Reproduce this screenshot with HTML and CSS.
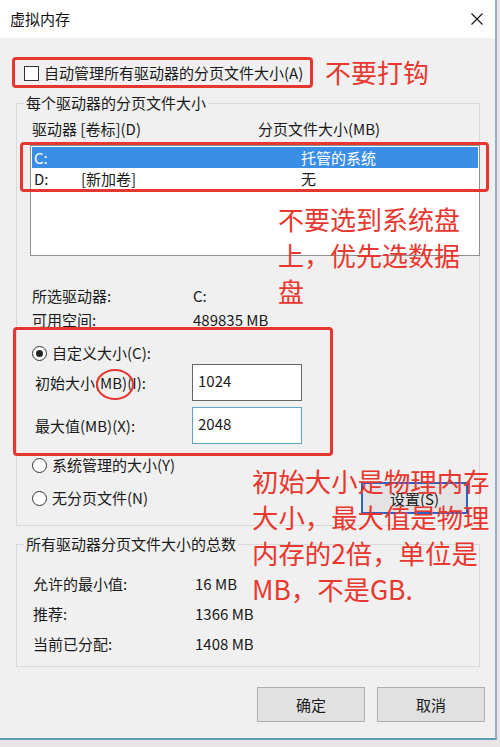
FILE: index.html
```html
<!DOCTYPE html>
<html lang="zh-CN">
<head>
<meta charset="utf-8">
<title>虚拟内存</title>
<link rel="stylesheet" href="styles.css">
</head>
<body>
<div class="window">
  <div class="titlebar">
    <span class="title">虚拟内存</span>
    <svg class="close" width="12" height="12" viewBox="0 0 12 12"><path d="M0.5 0.5 L11.5 11.5 M11.5 0.5 L0.5 11.5" stroke="#111" stroke-width="1.1" fill="none"/></svg>
  </div>
  <div class="dialog">
    <div class="auto-row"><span class="checkbox"></span><span>自动管理所有驱动器的分页文件大小(A)</span></div>

    <fieldset class="group group-drives">
      <legend>每个驱动器的分页文件大小</legend>
      <div class="list-head"><span class="h-drive">驱动器 [卷标](D)</span><span>分页文件大小(MB)</span></div>
      <div class="listbox">
        <div class="list-row selected"><span class="c-drive">C:</span><span class="c-label"></span><span class="c-size">托管的系统</span></div>
        <div class="list-row"><span class="c-drive">D:</span><span class="c-label">[新加卷]</span><span class="c-size">无</span></div>
      </div>
      <div class="info">
        <span>所选驱动器:</span><span>C:</span>
        <span>可用空间:</span><span>489835 MB</span>
      </div>
      <div class="radio-row first"><span class="radio checked"></span><span>自定义大小(C):</span></div>
      <div class="field-row"><span class="field-label">初始大小(MB)(I):</span><div class="input">1024</div></div>
      <div class="field-row second"><span class="field-label">最大值(MB)(X):</span><div class="input focus">2048</div></div>
      <div class="radio-row sys"><span class="radio"></span><span>系统管理的大小(Y)</span></div>
      <div class="radio-row last"><span class="radio"></span><span>无分页文件(N)</span><button class="btn btn-set">设置(S)</button></div>
    </fieldset>

    <fieldset class="group group-total">
      <legend>所有驱动器分页文件大小的总数</legend>
      <div class="totals">
        <span>允许的最小值:</span><span>16 MB</span>
        <span>推荐:</span><span>1366 MB</span>
        <span>当前已分配:</span><span>1408 MB</span>
      </div>
    </fieldset>

    <div class="actions">
      <button class="btn btn-main">确定</button>
      <button class="btn btn-main">取消</button>
    </div>
  </div>

  <div class="mark box1"></div>
  <div class="mark box2"></div>
  <div class="mark box3"></div>
  <div class="mark circle"></div>
  <div class="note note1">不要打钩</div>
  <div class="note note2">不要选到系统盘<br>上，优先选数据<br>盘</div>
  <div class="note note3">初始大小是物理内存<br>大小，最大值是物理<br>内存的2倍，单位是<br>MB，不是GB.</div>
</div>
</body>
</html>
```

FILE: styles.css
```css
html, body {
  margin: 0;
  padding: 0;
}
body {
  background: #e9e4e6;
  width: 500px;
  height: 747px;
  overflow: hidden;
  font-family: "Noto Sans CJK SC", "Microsoft YaHei", sans-serif;
  font-size: 15px;
  color: #1a1a1a;
}
.window {
  position: relative;
  width: 495px;
  height: 738px;
  background: #f0f0f0;
  border-right: 2px solid #8fb0cc;
  border-bottom: 2px solid #5f9db2;
}
.titlebar {
  height: 38px;
  background: #ffffff;
  display: flex;
  align-items: center;
  padding-left: 10px;
}
.title {
  font-size: 15px;
  line-height: 20px;
  color: #111;
}
.close {
  margin-left: auto;
  margin-right: 12px;
}
.dialog {
  display: flex;
  flex-direction: column;
}
.auto-row {
  display: flex;
  align-items: center;
  height: 20px;
  line-height: 20px;
  margin-top: 25px;
  padding-left: 24px;
}
.checkbox {
  width: 15px;
  height: 15px;
  box-sizing: border-box;
  border: 1px solid #333;
  background: #fff;
  margin-right: 5px;
}
.group {
  margin: 0 0 0 16px;
  width: 464px;
  box-sizing: border-box;
  border: 1px solid #d9d9d9;
  padding: 0;
  min-width: 0;
}
.group legend {
  margin-left: 7px;
  padding: 0 2px;
  line-height: 20px;
  height: 20px;
}
.group-drives {
  margin-top: 10px;
  padding-bottom: 11px;
}
.list-head {
  display: flex;
  line-height: 20px;
  margin: 6px 0 0 15px;
}
.h-drive {
  width: 226px;
}
.listbox {
  margin: 6px 0 0 13px;
  width: 450px;
  height: 111px;
  box-sizing: border-box;
  border: 1px solid #8e8e8e;
  background: #fff;
  padding: 1px;
}
.list-row {
  display: flex;
  height: 21px;
  line-height: 21px;
  padding-left: 2px;
}
.list-row.selected {
  background: #3a8ee6;
  color: #fff;
}
.c-drive { width: 47px; }
.c-label { width: 220px; }
.info {
  display: grid;
  grid-template-columns: 161px auto;
  row-gap: 4px;
  line-height: 20px;
  margin: 30px 0 0 15px;
}
.radio-row {
  display: flex;
  align-items: center;
  height: 20px;
  line-height: 20px;
  padding-left: 15px;
}
.radio-row.first { margin-top: 13px; }
.radio-row.sys { margin-top: 11px; }
.radio-row.last {
  margin-top: 7px;
  height: 32px;
}
.radio {
  width: 15px;
  height: 15px;
  box-sizing: border-box;
  border: 1px solid #333;
  border-radius: 50%;
  background: #fff;
  margin-right: 5px;
  display: flex;
  align-items: center;
  justify-content: center;
}
.radio.checked::after {
  content: "";
  width: 7px;
  height: 7px;
  border-radius: 50%;
  background: #222;
}
.field-row {
  display: flex;
  align-items: center;
  margin-top: 1px;
  padding-left: 18px;
}
.field-row.second { margin-top: 6px; }
.field-label {
  width: 157px;
  line-height: 20px;
}
.input {
  width: 110px;
  height: 37px;
  box-sizing: border-box;
  border: 1px solid #666;
  background: #fff;
  padding: 0 0 4px 5px;
  display: flex;
  align-items: center;
  font-size: 15px;
}
.input.focus {
  border-color: #5ea4c8;
}
.btn {
  font-family: inherit;
  font-size: 15px;
  color: #1a1a1a;
  background: #e1e1e1;
  border: 1px solid #adadad;
  padding: 0;
  box-sizing: border-box;
}
.btn-set {
  margin-left: auto;
  margin-right: 11px;
  width: 107px;
  height: 32px;
  border: 2px solid #2c63c7;
  background: #e3e3e3;
}
.group-total {
  margin-top: 8px;
  padding-bottom: 12px;
}
.totals {
  display: grid;
  grid-template-columns: 162px auto;
  row-gap: 10px;
  line-height: 20px;
  margin: 20px 0 0 16px;
}
.actions {
  display: flex;
  justify-content: flex-end;
  gap: 12px;
  margin-top: 20px;
  padding-right: 10px;
}
.btn-main {
  width: 108px;
  height: 35px;
}

/* red annotation overlays */
.mark {
  position: absolute;
  box-sizing: border-box;
  border: 3px solid #e5362f;
  border-radius: 4px;
}
.box1 { left: 12px; top: 57px; width: 301px; height: 31px; }
.box2 { left: 20px; top: 142px; width: 469px; height: 50px; }
.box3 { left: 13px; top: 327px; width: 320px; height: 129px; }
.circle {
  left: 96px;
  top: 369px;
  width: 38px;
  height: 31px;
  border-radius: 50%;
  border-width: 2.5px;
}
.note {
  position: absolute;
  color: #e8372f;
  font-size: 26px;
  line-height: 36px;
  white-space: nowrap;
}
.note1 { left: 325px; top: 54px; }
.note2 { left: 278px; top: 201px; }
.note3 { left: 252px; top: 463px; font-size: 26.4px; }
```
